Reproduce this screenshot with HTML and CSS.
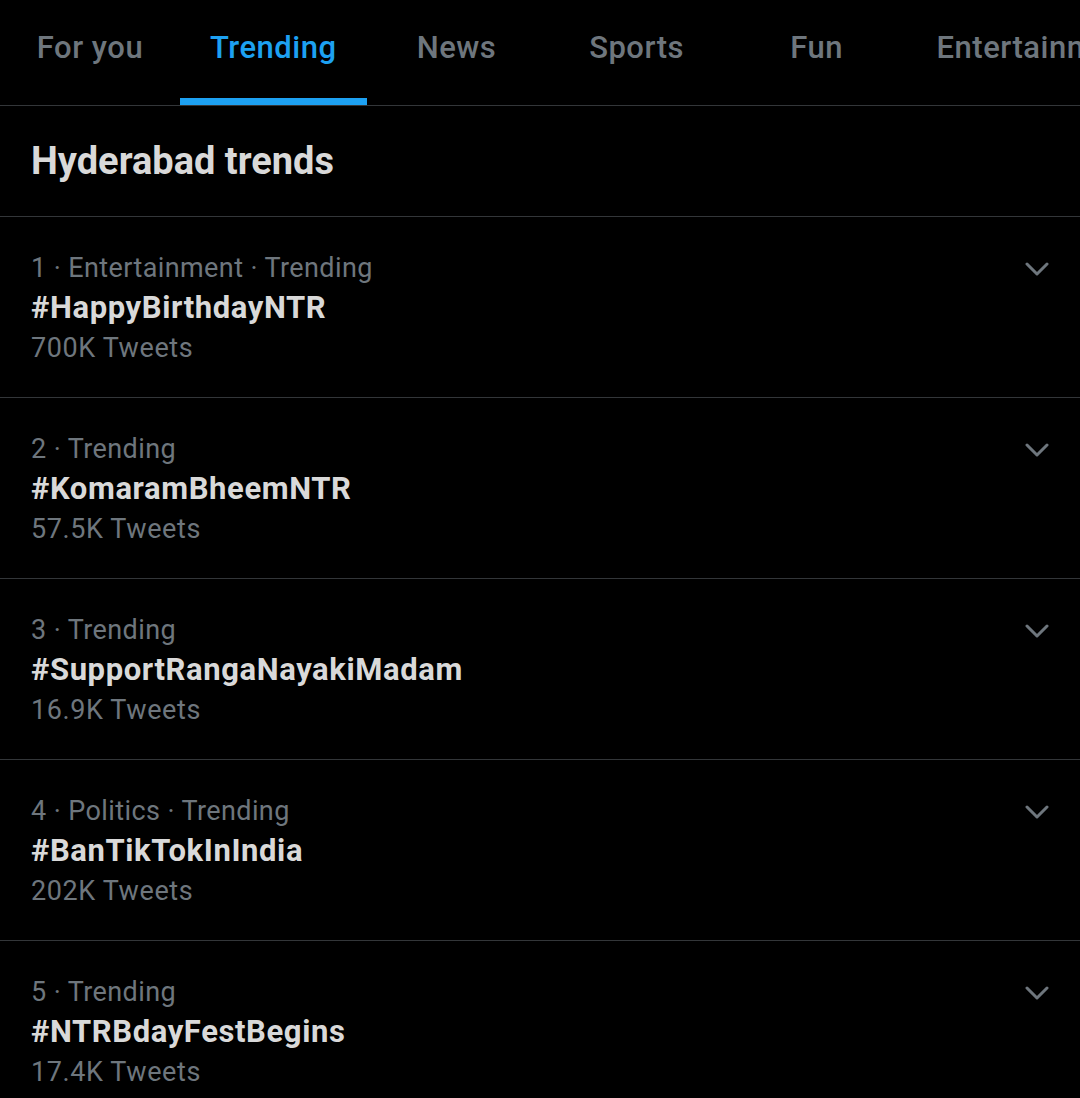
FILE: index.html
```html
<!DOCTYPE html>
<html lang="en">
<head>
<meta charset="utf-8">
<title>Trending</title>
<link rel="stylesheet" href="styles.css">
</head>
<body>
<div class="screen">
  <nav class="tabs">
    <div class="tab">For you</div>
    <div class="tab active">Trending</div>
    <div class="tab">News</div>
    <div class="tab">Sports</div>
    <div class="tab">Fun</div>
    <div class="tab">Entertainment</div>
  </nav>
  <header class="section-head">Hyderabad trends</header>
  <ul class="trends">
    <li class="trend">
      <div class="trend-body">
        <div class="meta">1 · Entertainment · Trending</div>
        <div class="tag">#HappyBirthdayNTR</div>
        <div class="count">700K Tweets</div>
      </div>
      <svg class="chev" viewBox="0 0 24 14" width="24" height="14"><polyline points="2,2 12,12 22,2"/></svg>
    </li>
    <li class="trend">
      <div class="trend-body">
        <div class="meta">2 · Trending</div>
        <div class="tag">#KomaramBheemNTR</div>
        <div class="count">57.5K Tweets</div>
      </div>
      <svg class="chev" viewBox="0 0 24 14" width="24" height="14"><polyline points="2,2 12,12 22,2"/></svg>
    </li>
    <li class="trend">
      <div class="trend-body">
        <div class="meta">3 · Trending</div>
        <div class="tag">#SupportRangaNayakiMadam</div>
        <div class="count">16.9K Tweets</div>
      </div>
      <svg class="chev" viewBox="0 0 24 14" width="24" height="14"><polyline points="2,2 12,12 22,2"/></svg>
    </li>
    <li class="trend">
      <div class="trend-body">
        <div class="meta">4 · Politics · Trending</div>
        <div class="tag">#BanTikTokInIndia</div>
        <div class="count">202K Tweets</div>
      </div>
      <svg class="chev" viewBox="0 0 24 14" width="24" height="14"><polyline points="2,2 12,12 22,2"/></svg>
    </li>
    <li class="trend">
      <div class="trend-body">
        <div class="meta">5 · Trending</div>
        <div class="tag">#NTRBdayFestBegins</div>
        <div class="count">17.4K Tweets</div>
      </div>
      <svg class="chev" viewBox="0 0 24 14" width="24" height="14"><polyline points="2,2 12,12 22,2"/></svg>
    </li>
  </ul>
</div>
</body>
</html>
```
FILE: styles.css
```css
html, body {
  margin: 0;
  padding: 0;
  background: #000;
}
body {
  font-family: Roboto, "Noto Sans", "Liberation Sans", sans-serif;
  width: 1080px;
  height: 1098px;
  overflow: hidden;
}
.screen {
  width: 1080px;
}
.tabs {
  display: flex;
  height: 105px;
  border-bottom: 1px solid #333639;
  overflow: hidden;
  white-space: nowrap;
}
.tab {
  flex: 0 0 auto;
  min-width: 180px;
  box-sizing: border-box;
  padding: 30px 30px 0;
  text-align: center;
  font-size: 31px;
  line-height: 36px;
  letter-spacing: 0.5px;
  font-weight: 500;
  color: #6e767d;
}
.tab.active {
  color: #1da1f2;
  box-shadow: inset 0 -7px 0 #1da1f2;
}
.section-head {
  height: 110px;
  box-sizing: border-box;
  padding: 0 31px;
  font-size: 38px;
  line-height: 110px;
  font-weight: 700;
  color: #d9d9d9;
}
.trends {
  list-style: none;
  margin: 0;
  padding: 0;
}
.trend {
  display: flex;
  justify-content: space-between;
  align-items: flex-start;
  height: 181px;
  box-sizing: border-box;
  border-top: 1px solid #333639;
  padding: 31px 31px 0 31px;
}
.trend-body {
  display: flex;
  flex-direction: column;
}
.meta, .count {
  font-size: 27px;
  line-height: 40px;
  letter-spacing: 0.4px;
  color: #6e767d;
}
.count {
  letter-spacing: 0.6px;
}
.tag {
  font-size: 31px;
  line-height: 40px;
  letter-spacing: 0.6px;
  font-weight: 700;
  color: #d9d9d9;
}
.chev {
  margin-top: 14px;
  fill: none;
  stroke: #6e767d;
  stroke-width: 3;
  stroke-linecap: round;
  stroke-linejoin: round;
}
```
